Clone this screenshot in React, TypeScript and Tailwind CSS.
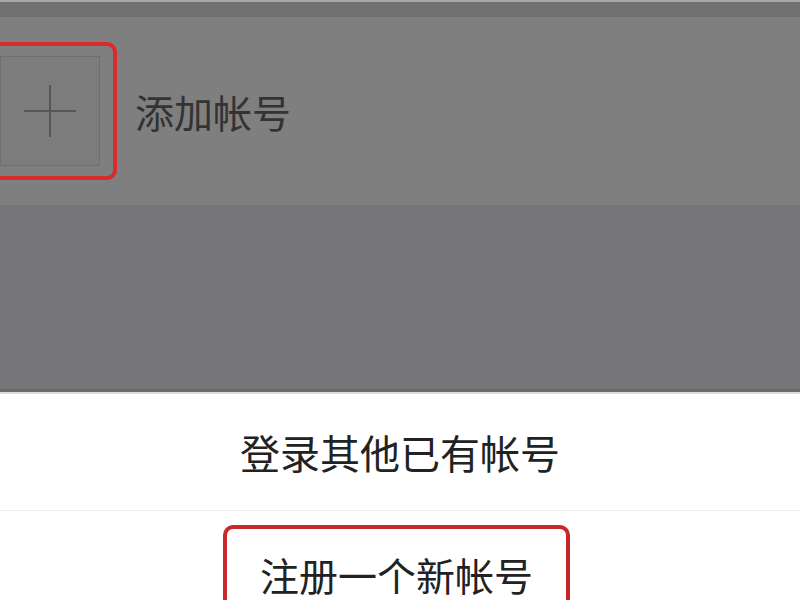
export default function App() {
  const font = { fontFamily: '"Noto Sans CJK SC", "Noto Sans", sans-serif' };
  return (
    <div className="w-[800px] h-[600px] overflow-hidden bg-white" style={font}>
      {/* dimmed account list behind the sheet */}
      <div className="h-[2px] bg-[#a9a9a9]" />
      <div className="h-[15px] bg-[#717171]" />
      <div className="flex h-[188px] items-center bg-[#7f7f7f]">
        <div className="-ml-[16px] rounded-[10px] border-4 border-[#d92b2b] py-[10px] pl-[12px] pr-[13px]">
          <div className="flex h-[110px] w-[100px] items-center justify-center border border-[#6f6f6f] bg-[#7c7c7c]">
            <svg width="54" height="54" viewBox="0 0 54 54" fill="none">
              <path d="M27 1v52M1 27h52" stroke="#565656" strokeWidth="2" />
            </svg>
          </div>
        </div>
        <span className="ml-[18px] text-[39px] leading-none text-[#333333]">添加帐号</span>
      </div>
      <div className="h-[184px] bg-[#767678]" />
      <div className="h-[3px] bg-[#6a6a6a]" />
      <div className="h-[2px] bg-[#dcdcdc]" />

      {/* action sheet */}
      <div className="flex h-[116px] items-center justify-center">
        <span className="text-[40px] leading-none text-[#222222]">登录其他已有帐号</span>
      </div>
      <div className="h-px bg-[#ececec]" />
      <div className="flex justify-center pt-[14px]">
        <div className="mr-[7px] flex h-[98px] w-[347px] items-center justify-center rounded-[10px] border-4 border-[#c8282c]">
          <span className="text-[39px] leading-none text-[#222222]">注册一个新帐号</span>
        </div>
      </div>
    </div>
  );
}
